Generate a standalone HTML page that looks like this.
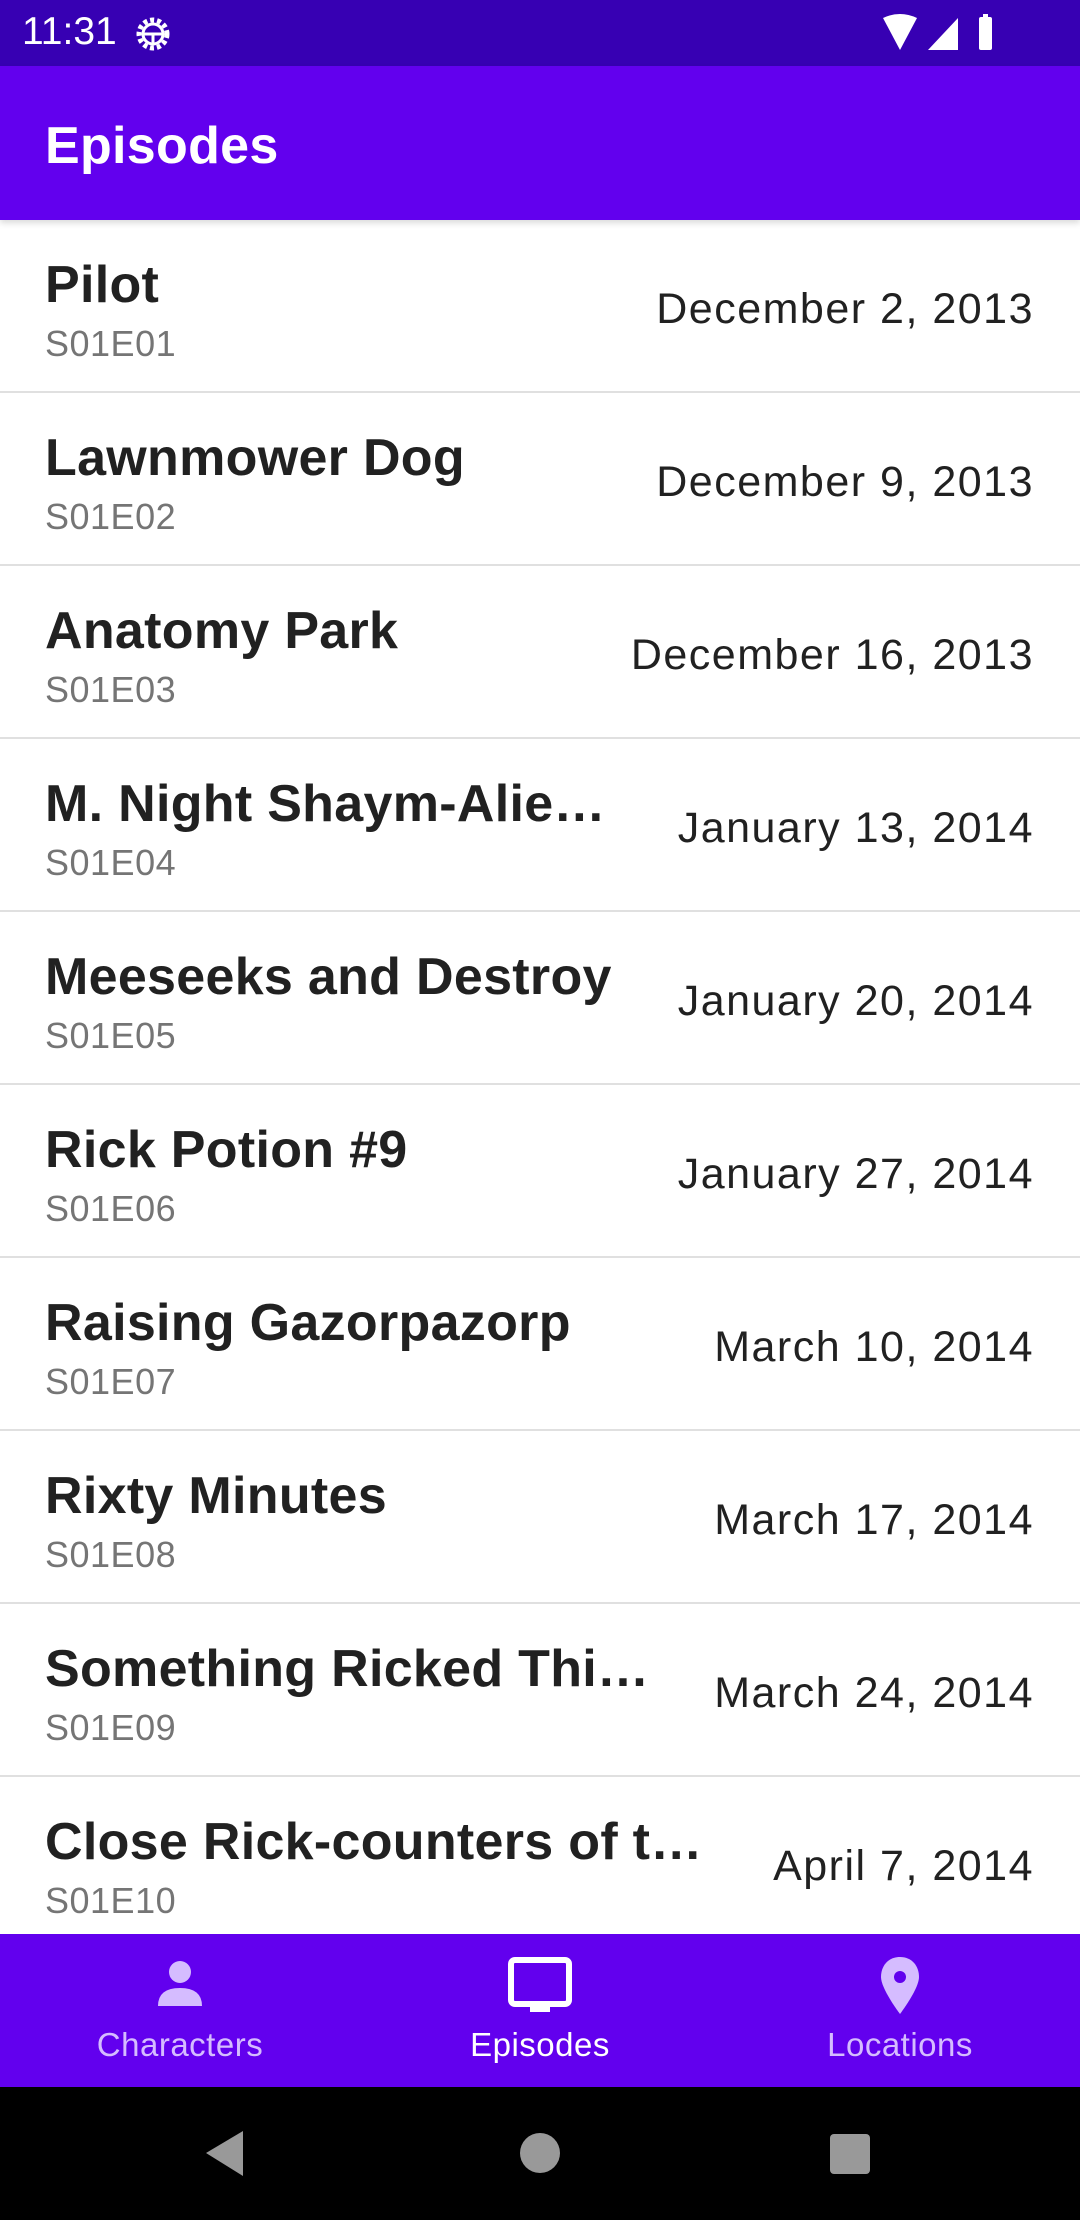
<!DOCTYPE html>
<html><head><meta charset="utf-8"><style>
*{margin:0;padding:0;box-sizing:border-box}
body{width:1080px;height:2220px;overflow:hidden;background:#fff;font-family:"Liberation Sans",Roboto,sans-serif;position:relative}
.sb{position:absolute;top:0;left:0;width:1080px;height:66px;background:#3700B3;color:#fff}
.ab{position:absolute;top:66px;left:0;width:1080px;height:154px;background:#6200EE;color:#fff;box-shadow:0 3px 6px rgba(0,0,0,.15);z-index:2}
.ab span{position:absolute;left:45px;top:50px;font-size:52px;font-weight:bold;letter-spacing:.3px}
.row{position:absolute;left:0;width:1080px;height:173px;border-bottom:2px solid #e0e0e0}
.t{position:absolute;left:45px;top:35px;font-size:52px;font-weight:bold;color:#212121;white-space:nowrap;letter-spacing:.3px}
.s{position:absolute;left:45px;top:103px;font-size:36px;color:#757575;letter-spacing:.5px}
.d{position:absolute;right:46px;top:65px;font-size:43px;color:#212121;letter-spacing:1.5px}
.bn{position:absolute;top:1934px;left:0;width:1080px;height:153px;background:#6200EE;z-index:3}
.it{position:absolute;top:0;width:360px;height:153px;text-align:center;color:#d5bcff}
.it .l{position:absolute;left:0;right:0;top:92px;font-size:33px;letter-spacing:.5px}
.it svg{position:absolute;left:146px;top:22px}
.nv{position:absolute;top:2087px;left:0;width:1080px;height:133px;background:#000;z-index:3}
</style></head><body>
<div class="sb">
<span style="position:absolute;left:22px;top:10px;font-size:39px">11:31</span>
<svg style="position:absolute;left:133px;top:14px" width="40" height="40" viewBox="0 0 40 40"><circle cx="20" cy="20" r="14" fill="none" stroke="#fff" stroke-width="5" stroke-dasharray="4 3"/><circle cx="20" cy="20" r="10" fill="none" stroke="#fff" stroke-width="3"/><path d="M10 20h20M20 20v10" stroke="#fff" stroke-width="3"/></svg>
<svg style="position:absolute;left:880px;top:14px" width="130" height="38" viewBox="0 0 130 38"><path d="M3 4Q20-4 37 4L20 36Z" fill="#fff"/><path d="M48 36L78 4V36Z" fill="#fff"/><rect x="99" y="3" width="13" height="33" rx="2" fill="#fff"/><rect x="103" y="0" width="5" height="4" fill="#fff"/></svg>
</div>
<div class="ab"><span>Episodes</span></div>

<div class="row" style="top:220px"><div class="t">Pilot</div><div class="s">S01E01</div><div class="d">December 2, 2013</div></div>
<div class="row" style="top:393px"><div class="t">Lawnmower Dog</div><div class="s">S01E02</div><div class="d">December 9, 2013</div></div>
<div class="row" style="top:566px"><div class="t">Anatomy Park</div><div class="s">S01E03</div><div class="d">December 16, 2013</div></div>
<div class="row" style="top:739px"><div class="t">M. Night Shaym-Alie…</div><div class="s">S01E04</div><div class="d">January 13, 2014</div></div>
<div class="row" style="top:912px"><div class="t">Meeseeks and Destroy</div><div class="s">S01E05</div><div class="d">January 20, 2014</div></div>
<div class="row" style="top:1085px"><div class="t">Rick Potion #9</div><div class="s">S01E06</div><div class="d">January 27, 2014</div></div>
<div class="row" style="top:1258px"><div class="t">Raising Gazorpazorp</div><div class="s">S01E07</div><div class="d">March 10, 2014</div></div>
<div class="row" style="top:1431px"><div class="t">Rixty Minutes</div><div class="s">S01E08</div><div class="d">March 17, 2014</div></div>
<div class="row" style="top:1604px"><div class="t">Something Ricked Thi…</div><div class="s">S01E09</div><div class="d">March 24, 2014</div></div>
<div class="row" style="top:1777px"><div class="t">Close Rick-counters of t…</div><div class="s">S01E10</div><div class="d">April 7, 2014</div></div>

<div class="bn">
<div class="it" style="left:0"><svg width="68" height="60" viewBox="0 0 68 60"><ellipse cx="34" cy="16" rx="11" ry="11" fill="#d5bcff"/><path d="M12 50Q12 32 34 32Q56 32 56 50Z" fill="#d5bcff"/></svg><div class="l">Characters</div></div>
<div class="it" style="left:360px;color:#fff"><svg width="68" height="60" viewBox="0 0 68 60"><rect x="5" y="4" width="58" height="44" rx="4" fill="none" stroke="#fff" stroke-width="6"/><rect x="24" y="47" width="20" height="9" fill="#fff"/></svg><div class="l">Episodes</div></div>
<div class="it" style="left:720px"><svg width="68" height="60" viewBox="0 0 68 60"><path d="M34 1C22 1 15 10 15 21C15 33 34 58 34 58C34 58 53 33 53 21C53 10 46 1 34 1Z" fill="#d5bcff"/><circle cx="34" cy="21" r="6" fill="#6200EE"/></svg><div class="l">Locations</div></div>
</div>
<div class="nv">
<svg style="position:absolute;left:200px;top:42px" width="50" height="50" viewBox="0 0 50 50"><path d="M43 2V47L6 24Z" fill="#999"/></svg>
<svg style="position:absolute;left:519px;top:45px" width="42" height="42"><circle cx="21" cy="21" r="20" fill="#999"/></svg>
<svg style="position:absolute;left:829px;top:46px" width="42" height="42"><rect x="1" y="1" width="40" height="40" rx="4" fill="#999"/></svg>
</div>
</body></html>
